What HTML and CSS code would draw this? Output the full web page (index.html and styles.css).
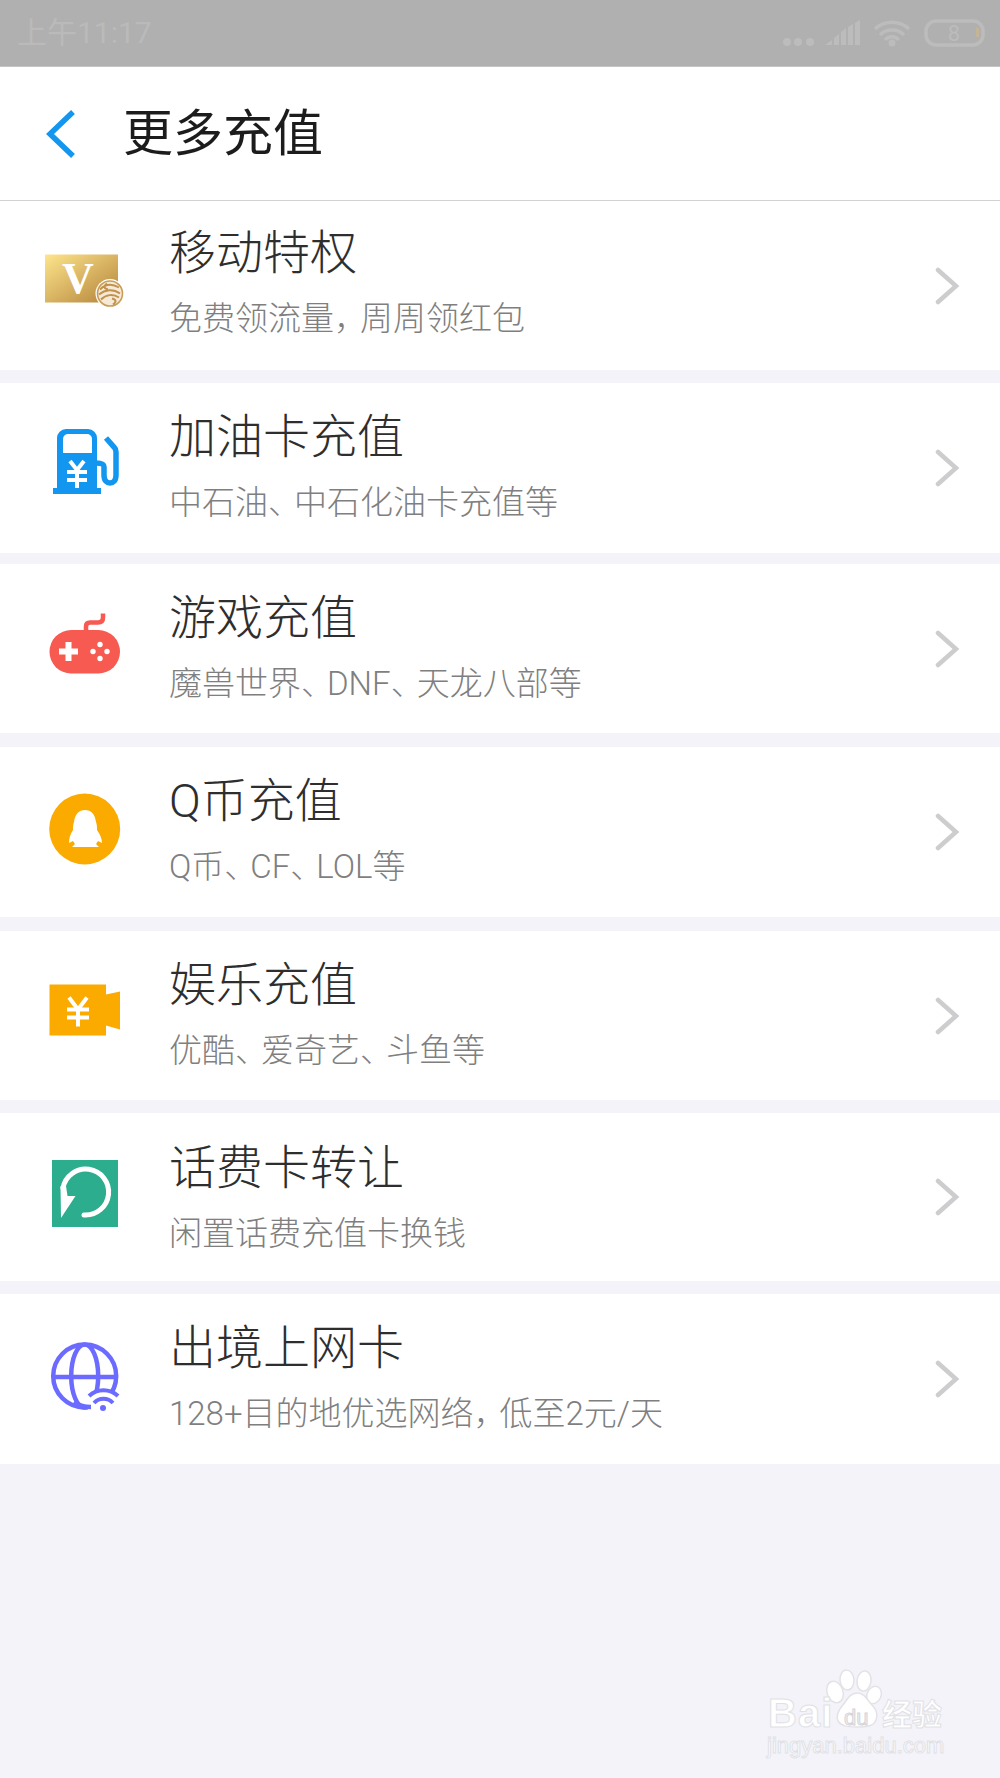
FILE: index.html
```html
<!DOCTYPE html>
<html lang="zh">
<head>
<meta charset="utf-8">
<title>更多充值</title>
<link rel="stylesheet" href="styles.css">
</head>
<body>
<div class="page">
  <div class="status">
    <span class="clock">上午11:17</span>
    <svg class="status-icons" viewBox="770 0 230 66" width="230" height="66">
      <g fill="#bcbcbc">
        <circle cx="787" cy="42" r="4"/><circle cx="798" cy="42" r="4"/><circle cx="810" cy="42" r="4"/>
        <path d="M825 45l7-5v5zM834 38l5-4v11h-5zM841 32l5-4v17h-5zM848 27l5-3v21h-5zM855 23l5-3v25h-5z"/>
        <circle cx="892" cy="43" r="3.5"/>
      </g>
      <g fill="none" stroke="#bcbcbc" stroke-width="3.5">
        <path d="M875 29a25 25 0 0 1 34 0M880 35a17 17 0 0 1 24 0M885 40a9 9 0 0 1 14 0"/>
        <rect x="926" y="21" width="57" height="24" rx="10"/>
      </g>
      <rect x="976" y="28" width="3" height="9" fill="#c4b596"/>
      <text x="954" y="41" class="battery">8</text>
    </svg>
  </div>

  <header class="head">
    <svg class="back" viewBox="0 0 34 48" width="34" height="48"><path d="M29 2L6 24l23 22" fill="none" stroke="#1296f0" stroke-width="5.500"/></svg>
    <h1 class="head-title">更多充值</h1>
  </header>

  <main class="list">
    <a class="row row-a first">
      <svg class="ico" viewBox="45 245.5 80 80">
        <defs><linearGradient id="gold" x1="0" y1="0" x2="1" y2="1"><stop offset="0" stop-color="#fee58c"/><stop offset="1" stop-color="#b3833a"/></linearGradient></defs>
        <path d="M45 254h73v48H45z" fill="url(#gold)"/>
        <text x="78" y="292" class="vee">V</text>
        <circle cx="110" cy="293" r="14.500" fill="#fff"/>
        <circle cx="110" cy="293" r="12.500" fill="#f6ead6" stroke="#c99c58" stroke-width="1.600"/>
        <path d="M100 289c5-5 12-6 19-2M99 294c6-5 14-6 21-1M101 299c5-5 12-6 18-2M107 283c-4 3-3 5 1 6M113 304c4-3 3-5-1-6" fill="none" stroke="#c2924d" stroke-width="2"/>
      </svg>
      <div class="txt"><div class="name">移动特权</div><div class="sub">免费领流量<span class="pn">，</span>周周领红包</div></div>
      <svg class="chev" viewBox="0 0 26 38" width="26" height="38"><path d="M4 3l18 16L4 35" fill="none" stroke="#cdcdcf" stroke-width="4.500" stroke-linecap="round"/></svg>
    </a>

    <a class="row row-b">
      <svg class="ico" viewBox="45 428 80 80">
        <path d="M53 494v-6h4v-50a9 9 0 0 1 9-9h22a9 9 0 0 1 9 9v50h4v6z" fill="#1296f0"/>
        <path d="M63 453v-14a5 5 0 0 1 5-5h19a5 5 0 0 1 5 5v14z" fill="#fff"/>
        <path d="M106 438l8 9q2 2 2 5v23c0 6-3 8-6 8s-6-2-6-8v-8c0-3-2-4-8-4" fill="none" stroke="#1296f0" stroke-width="5.500"/>
        <path d="M70 461l7 9 7-9M67 472h20M67 480h20M77 470v18" fill="none" stroke="#fff" stroke-width="4"/>
      </svg>
      <div class="txt"><div class="name">加油卡充值</div><div class="sub">中石油<span class="pn">、</span>中石化油卡充值等</div></div>
      <svg class="chev" viewBox="0 0 26 38" width="26" height="38"><path d="M4 3l18 16L4 35" fill="none" stroke="#cdcdcf" stroke-width="4.500" stroke-linecap="round"/></svg>
    </a>

    <a class="row row-a tight">
      <svg class="ico" viewBox="45 608.5 80 80">
        <rect x="49.500" y="629.500" width="70.500" height="43.500" rx="21.700" fill="#f65a50"/>
        <path d="M86 631v-5q0-4 4-4h8q5 0 5-5v-4" fill="none" stroke="#f65a50" stroke-width="4.500"/>
        <path d="M59 651h19M68.500 641.500v19" stroke="#fff" stroke-width="6" fill="none"/>
        <g fill="#fff"><circle cx="93" cy="651" r="2.700"/><circle cx="100" cy="644" r="2.700"/><circle cx="107" cy="651" r="2.700"/><circle cx="100" cy="658" r="2.700"/></g>
      </svg>
      <div class="txt"><div class="name">游戏充值</div><div class="sub">魔兽世界<span class="pn">、</span>DNF<span class="pn">、</span>天龙八部等</div></div>
      <svg class="chev" viewBox="0 0 26 38" width="26" height="38"><path d="M4 3l18 16L4 35" fill="none" stroke="#cdcdcf" stroke-width="4.500" stroke-linecap="round"/></svg>
    </a>

    <a class="row row-b loose">
      <svg class="ico" viewBox="45 792 80 80">
        <circle cx="84.700" cy="829" r="35.500" fill="#fbab00"/>
        <path d="M73 830c0-3 0-5 1-8 1-8 5-12 11-12s10 4 11 12c1 3 1 5 1 8 3 4 5 9 5 13l-4-2-2 3 3 3H72l3-3-2-3-4 2c0-4 1-9 4-13z" fill="#fff"/>
      </svg>
      <div class="txt"><div class="name">Q币充值</div><div class="sub">Q币<span class="pn">、</span>CF<span class="pn">、</span>LOL等</div></div>
      <svg class="chev" viewBox="0 0 26 38" width="26" height="38"><path d="M4 3l18 16L4 35" fill="none" stroke="#cdcdcf" stroke-width="4.500" stroke-linecap="round"/></svg>
    </a>

    <a class="row row-a loose">
      <svg class="ico" viewBox="45 975.5 80 80">
        <path d="M49.500 984H106v10l14-3v38l-14-4v10H49.500z" fill="#fbab00"/>
        <path d="M69 997l9 12 9-12M67 1009h22M67 1017h22M78 1009v17" fill="none" stroke="#fff" stroke-width="4"/>
      </svg>
      <div class="txt"><div class="name">娱乐充值</div><div class="sub">优酷<span class="pn">、</span>爱奇艺<span class="pn">、</span>斗鱼等</div></div>
      <svg class="chev" viewBox="0 0 26 38" width="26" height="38"><path d="M4 3l18 16L4 35" fill="none" stroke="#cdcdcf" stroke-width="4.500" stroke-linecap="round"/></svg>
    </a>

    <a class="row row-c low">
      <svg class="ico" viewBox="45 1157 80 80">
        <rect x="52" y="1160" width="66" height="67" fill="#2bad8e"/>
        <path d="M84 1215a23 23 0 1 0-21-27" fill="none" stroke="#fff" stroke-width="5" stroke-linecap="round"/>
        <path d="M60.500 1186l5.500 0 1.500 10h8l-14.500 22z" fill="#fff"/>
      </svg>
      <div class="txt"><div class="name">话费卡转让</div><div class="sub">闲置话费充值卡换钱</div></div>
      <svg class="chev" viewBox="0 0 26 38" width="26" height="38"><path d="M4 3l18 16L4 35" fill="none" stroke="#cdcdcf" stroke-width="4.500" stroke-linecap="round"/></svg>
    </a>

    <a class="row row-b">
      <svg class="ico" viewBox="45 1339 80 80">
        <g fill="none" stroke="#6c6bff" stroke-width="4.500">
          <circle cx="84.700" cy="1376" r="31.500"/>
          <ellipse cx="84.700" cy="1376" rx="13.500" ry="31.500"/>
          <path d="M53 1377h63"/>
        </g>
        <path d="M84 1392h42v26H90z" fill="#fff"/>
        <path d="M89 1396a21 21 0 0 1 29 0M94 1403a13 13 0 0 1 19 0" fill="none" stroke="#6c6bff" stroke-width="4"/>
        <path d="M74 1402q6 5 17 5" fill="none" stroke="#6c6bff" stroke-width="4.500"/>
        <circle cx="103" cy="1408" r="3" fill="#6c6bff"/>
      </svg>
      <div class="txt"><div class="name">出境上网卡</div><div class="sub">128+目的地优选网络<span class="pn">，</span>低至2元/天</div></div>
      <svg class="chev" viewBox="0 0 26 38" width="26" height="38"><path d="M4 3l18 16L4 35" fill="none" stroke="#cdcdcf" stroke-width="4.500" stroke-linecap="round"/></svg>
    </a>
  </main>

  <svg class="mark" viewBox="740 1650 240 128" width="240" height="128">
    <g class="mark-shape">
      <ellipse cx="835" cy="1692" rx="8" ry="11" transform="rotate(-18 835 1692)"/>
      <ellipse cx="847" cy="1680" rx="7" ry="10" transform="rotate(-5 847 1680)"/>
      <ellipse cx="864" cy="1681" rx="7" ry="10" transform="rotate(8 864 1681)"/>
      <ellipse cx="874" cy="1695" rx="7" ry="9" transform="rotate(25 874 1695)"/>
      <path d="M857 1693c8 0 11 8 15 12 5 5 6 10 4 15-2 6-9 7-19 7s-16-1-19-6c-2-5 0-10 4-15 4-4 7-13 15-13z"/>
    </g>
    <text x="768" y="1727" class="mark-big">Bai</text>
    <text x="844" y="1725" class="mark-du">du</text>
    <text x="882" y="1725" class="mark-cn">经验</text>
    <text x="767" y="1753" class="mark-url">jingyan.baidu.com</text>
  </svg>
</div>
</body>
</html>
```
FILE: styles.css
```css
* { box-sizing: border-box; }
html, body { margin: 0; padding: 0; }
body { font-family: Roboto, "Noto Sans CJK SC", sans-serif; background: #f3f3f9; }
.page { position: relative; width: 1000px; height: 1778px; overflow: hidden; background: #f3f3f9; }

.status { height: 67px; background: #b0b0b0; border-bottom: 1px solid #c4c4c4; display: flex; justify-content: space-between; align-items: center; padding-left: 17px; }
.clock { color: #bababa; font-size: 30px; line-height: 1; }
.status-icons { display: block; flex: none; }
.battery { fill: #bcbcbc; font-size: 22px; text-anchor: middle; font-family: Roboto, sans-serif; }

.head { height: 134px; background: #fff; border-bottom: 1px solid #d2d2d4; display: flex; align-items: center; padding-left: 44px; }
.back { display: block; flex: none; }
.head-title { margin: 0 0 0 45px; font-size: 50px; line-height: 1; font-weight: 400; color: #1c1c1c; }

.list { display: flex; flex-direction: column; gap: 13px; }
.row { background: #fff; display: flex; align-items: center; padding-left: 45px; padding-right: 40px; }
.row-a { height: 169px; }
.row-b { height: 170px; }
.row-c { height: 168px; }
.tight { margin-top: -2px; }
.loose { margin-top: 1px; }
.ico { display: block; flex: none; width: 80px; height: 80px; }
.txt { flex: 1; padding-left: 44px; padding-bottom: 6px; }
.first .txt { padding-bottom: 9px; }
.low .txt { padding-bottom: 2px; }
.name { font-size: 47px; line-height: 60px; font-weight: 300; color: #2e2e2e; }
.sub { font-size: 33px; line-height: 40px; font-weight: 300; color: #7f7f7f; margin-top: 16px; }
.pn { letter-spacing: -7px; }
.chev { display: block; flex: none; }

.vee { font-family: "Liberation Serif", serif; font-weight: 700; font-size: 44px; fill: #fff; text-anchor: middle; }

.mark { position: absolute; left: 740px; top: 1650px; display: block; }
.mark-shape { fill: #fff; stroke: #e3e3e7; stroke-width: 1.5; }
.mark-big, .mark-du, .mark-cn, .mark-url { fill: #fff; stroke: #e1e1e5; stroke-width: 1; font-family: "Liberation Sans", "Noto Sans CJK SC", sans-serif; }
.mark-big { font-size: 40px; font-weight: 700; letter-spacing: 1px; }
.mark-du { font-size: 22px; fill: #f3f3f9; stroke: #d4d4d9; }
.mark-cn { font-size: 30px; font-weight: 700; }
.mark-url { font-size: 22px; }
```
